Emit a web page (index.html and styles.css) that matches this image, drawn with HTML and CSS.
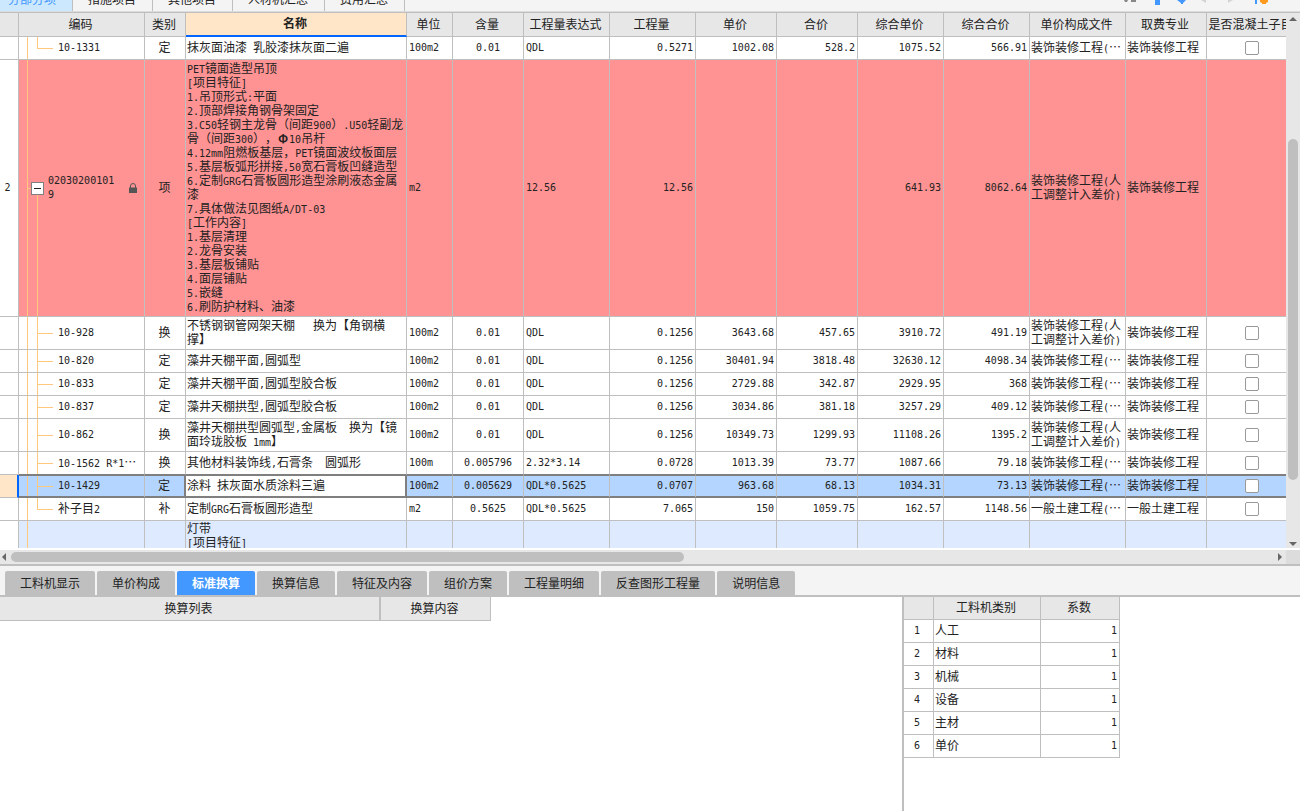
FILE: index.html
```html
<!DOCTYPE html>
<html lang="zh-CN">
<head>
<meta charset="utf-8">
<title>分部分项</title>
<link rel="stylesheet" href="styles.css">
</head>
<body>
<header class="topbar">
  <nav class="toptabs">
    <button class="toptab active">分部分项</button>
    <button class="toptab">措施项目</button>
    <button class="toptab">其他项目</button>
    <button class="toptab">人材机汇总</button>
    <button class="toptab">费用汇总</button>
  </nav>
  <svg class="tools" width="150" height="5" viewBox="0 0 150 5" aria-hidden="true">
    <path d="M0 0h4l-1 2h-2zM7 0h5v2h-5z" fill="#888"/>
    <path d="M31 0h5v5h-5zM53 0h9l-3 3v1h-2v-1z" fill="#4398ff"/>
    <path d="M77 0h5v3zM104 0h5l-5 3z" fill="#d4d4d4"/>
    <path d="M131 0h2v4h-2z" fill="#4398ff"/>
    <path d="M136 0h8v2l-2 1v1h-4v-1l-2-1z" fill="#ff9a1f"/>
  </svg>
</header>

<main class="grid">
  <div class="grid-view">
    <table class="items">
      <colgroup>
        <col class="w19"><col class="w126"><col class="w41"><col class="w221"><col class="w46"><col class="w71"><col class="w86"><col class="w86"><col class="w81"><col class="w81"><col class="w86"><col class="w86"><col class="w96"><col class="w81"><col class="w90">
      </colgroup>
      <thead>
        <tr><th></th><th>编码</th><th>类别</th><th class="current">名称</th><th>单位</th><th>含量</th><th>工程量表达式</th><th>工程量</th><th>单价</th><th>合价</th><th>综合单价</th><th>综合合价</th><th>单价构成文件</th><th>取费专业</th><th>是否混凝土子目</th></tr>
      </thead>
      <tbody>
        <tr><td></td><td class="code last n">10-1331</td><td class="mid">定</td><td>抹灰面油漆<span class="en">&nbsp;</span>乳胶漆抹灰面二遍</td><td class="n">100m2</td><td class="n mid">0.01</td><td class="n">QDL</td><td class="n num">0.5271</td><td class="n num">1002.08</td><td class="n num">528.2</td><td class="n num">1075.52</td><td class="n num">566.91</td><td>装饰装修工程<span class="en">(</span>…</td><td>装饰装修工程</td><td class="mid"><input type="checkbox" aria-label="是否混凝土子目"></td></tr>

        <tr class="red"><td class="n mid">2</td><td class="parent"><div class="parent-box"><button class="toggle" aria-label="折叠"></button><span class="en">02030200101<br>9</span><svg class="lock" width="8" height="10" viewBox="0 0 8 10" aria-label="锁定"><path d="M1.500 5V3a2.500 2.500 0 0 1 5 0v2" fill="none" stroke="#555"/><path d="M0 4.500h8V10H0z" fill="#555"/></svg></div></td><td class="mid">项</td><td><span class="en">PET</span>镜面造型吊顶<br><span class="en">[</span>项目特征<span class="en">]</span><br><span class="en">1.</span>吊顶形式<span class="en">:</span>平面<br><span class="en">2.</span>顶部焊接角钢骨架固定<br><span class="en">3.C50</span>轻钢主龙骨（间距<span class="en">900</span>）<span class="en">.U50</span>轻副龙<br>骨（间距<span class="en">300</span>），<span class="phi">Φ</span><span class="en">10</span>吊杆<br><span class="en">4.12mm</span>阻燃板基层，<span class="en">PET</span>镜面波纹板面层<br><span class="en">5.</span>基层板弧形拼接<span class="en">,50</span>宽石膏板凹缝造型<br><span class="en">6.</span>定制<span class="en">GRG</span>石膏板圆形造型涂刷液态金属<br>漆<br><span class="en">7.</span>具体做法见图纸<span class="en">A/DT-03</span><br><span class="en">[</span>工作内容<span class="en">]</span><br><span class="en">1.</span>基层清理<br><span class="en">2.</span>龙骨安装<br><span class="en">3.</span>基层板铺贴<br><span class="en">4.</span>面层铺贴<br><span class="en">5.</span>嵌缝<br><span class="en">6.</span>刷防护材料、油漆</td><td class="n">m2</td><td></td><td class="n">12.56</td><td class="n num">12.56</td><td></td><td></td><td class="n num">641.93</td><td class="n num">8062.64</td><td>装饰装修工程<span class="en">(</span>人<br>工调整计入差价<span class="en">)</span></td><td>装饰装修工程</td><td></td></tr>

        <tr class="tall"><td></td><td class="code n">10-928</td><td class="mid">换</td><td>不锈钢钢管网架天棚<span class="en">&nbsp;&nbsp;&nbsp;</span>换为【角钢横<br>撑】</td><td class="n">100m2</td><td class="n mid">0.01</td><td class="n">QDL</td><td class="n num">0.1256</td><td class="n num">3643.68</td><td class="n num">457.65</td><td class="n num">3910.72</td><td class="n num">491.19</td><td>装饰装修工程<span class="en">(</span>人<br>工调整计入差价<span class="en">)</span></td><td>装饰装修工程</td><td class="mid"><input type="checkbox" aria-label="是否混凝土子目"></td></tr>

        <tr><td></td><td class="code n">10-820</td><td class="mid">定</td><td>藻井天棚平面<span class="en">,</span>圆弧型</td><td class="n">100m2</td><td class="n mid">0.01</td><td class="n">QDL</td><td class="n num">0.1256</td><td class="n num">30401.94</td><td class="n num">3818.48</td><td class="n num">32630.12</td><td class="n num">4098.34</td><td>装饰装修工程<span class="en">(</span>…</td><td>装饰装修工程</td><td class="mid"><input type="checkbox" aria-label="是否混凝土子目"></td></tr>

        <tr><td></td><td class="code n">10-833</td><td class="mid">定</td><td>藻井天棚平面<span class="en">,</span>圆弧型胶合板</td><td class="n">100m2</td><td class="n mid">0.01</td><td class="n">QDL</td><td class="n num">0.1256</td><td class="n num">2729.88</td><td class="n num">342.87</td><td class="n num">2929.95</td><td class="n num">368</td><td>装饰装修工程<span class="en">(</span>…</td><td>装饰装修工程</td><td class="mid"><input type="checkbox" aria-label="是否混凝土子目"></td></tr>

        <tr><td></td><td class="code n">10-837</td><td class="mid">定</td><td>藻井天棚拱型<span class="en">,</span>圆弧型胶合板</td><td class="n">100m2</td><td class="n mid">0.01</td><td class="n">QDL</td><td class="n num">0.1256</td><td class="n num">3034.86</td><td class="n num">381.18</td><td class="n num">3257.29</td><td class="n num">409.12</td><td>装饰装修工程<span class="en">(</span>…</td><td>装饰装修工程</td><td class="mid"><input type="checkbox" aria-label="是否混凝土子目"></td></tr>

        <tr class="tall"><td></td><td class="code n">10-862</td><td class="mid">换</td><td>藻井天棚拱型圆弧型<span class="en">,</span>金属板<span class="en">&nbsp;&nbsp;</span>换为【镜<br>面玲珑胶板<span class="en">&nbsp;1mm</span>】</td><td class="n">100m2</td><td class="n mid">0.01</td><td class="n">QDL</td><td class="n num">0.1256</td><td class="n num">10349.73</td><td class="n num">1299.93</td><td class="n num">11108.26</td><td class="n num">1395.2</td><td>装饰装修工程<span class="en">(</span>人<br>工调整计入差价<span class="en">)</span></td><td>装饰装修工程</td><td class="mid"><input type="checkbox" aria-label="是否混凝土子目"></td></tr>

        <tr class="before-selected"><td></td><td class="code"><span class="en">10-1562 R*1</span>…</td><td class="mid">换</td><td>其他材料装饰线<span class="en">,</span>石膏条<span class="en">&nbsp;&nbsp;</span>圆弧形</td><td class="n">100m</td><td class="n mid">0.005796</td><td class="n">2.32*3.14</td><td class="n num">0.0728</td><td class="n num">1013.39</td><td class="n num">73.77</td><td class="n num">1087.66</td><td class="n num">79.18</td><td>装饰装修工程<span class="en">(</span>…</td><td>装饰装修工程</td><td class="mid"><input type="checkbox" aria-label="是否混凝土子目"></td></tr>

        <tr class="selected"><td></td><td class="code n">10-1429</td><td class="mid">定</td><td class="cell">涂料<span class="en">&nbsp;</span>抹灰面水质涂料三遍</td><td class="n">100m2</td><td class="n mid">0.005629</td><td class="n">QDL*0.5625</td><td class="n num">0.0707</td><td class="n num">963.68</td><td class="n num">68.13</td><td class="n num">1034.31</td><td class="n num">73.13</td><td>装饰装修工程<span class="en">(</span>…</td><td>装饰装修工程</td><td class="mid"><input type="checkbox" aria-label="是否混凝土子目"></td></tr>

        <tr><td></td><td class="code last">补子目<span class="en">2</span></td><td class="mid">补</td><td>定制<span class="en">GRG</span>石膏板圆形造型</td><td class="n">m2</td><td class="n mid">0.5625</td><td class="n">QDL*0.5625</td><td class="n num">7.065</td><td class="n num">150</td><td class="n num">1059.75</td><td class="n num">162.57</td><td class="n num">1148.56</td><td>一般土建工程<span class="en">(</span>…</td><td>一般土建工程</td><td class="mid"><input type="checkbox" aria-label="是否混凝土子目"></td></tr>

        <tr class="blue"><td></td><td class="parent"></td><td></td><td><div class="cut">灯带<br><span class="en">[</span>项目特征<span class="en">]</span></div></td><td></td><td></td><td></td><td></td><td></td><td></td><td></td><td></td><td></td><td></td><td></td></tr>
      </tbody>
    </table>
  </div>
  <div class="vbar">
    <i class="arrow up"></i><span class="gap-a"></span><span class="vthumb"></span><span class="gap-b"></span><i class="arrow down"></i>
  </div>
</main>
<div class="hbar">
  <div class="htrack"><i class="arrow left"></i><span class="hthumb"></span><span class="hrest"></span><i class="arrow right"></i></div>
  <span class="corner"></span>
</div>

<nav class="tabs">
  <button class="tab">工料机显示</button>
  <button class="tab">单价构成</button>
  <button class="tab active">标准换算</button>
  <button class="tab">换算信息</button>
  <button class="tab">特征及内容</button>
  <button class="tab">组价方案</button>
  <button class="tab">工程量明细</button>
  <button class="tab">反查图形工程量</button>
  <button class="tab">说明信息</button>
</nav>

<section class="panels">
  <div class="left">
    <table class="conv">
      <colgroup><col class="w381"><col class="w110"></colgroup>
      <thead><tr><th class="thick">换算列表</th><th>换算内容</th></tr></thead>
    </table>
  </div>
  <div class="right">
    <table class="coef">
      <colgroup><col class="w30"><col class="w107"><col class="w79"></colgroup>
      <thead><tr><th></th><th>工料机类别</th><th>系数</th></tr></thead>
      <tbody>
        <tr><td class="n mid">1</td><td>人工</td><td class="n num">1</td></tr>
        <tr><td class="n mid">2</td><td>材料</td><td class="n num">1</td></tr>
        <tr><td class="n mid">3</td><td>机械</td><td class="n num">1</td></tr>
        <tr><td class="n mid">4</td><td>设备</td><td class="n num">1</td></tr>
        <tr><td class="n mid">5</td><td>主材</td><td class="n num">1</td></tr>
        <tr><td class="n mid">6</td><td>单价</td><td class="n num">1</td></tr>
      </tbody>
    </table>
  </div>
</section>
</body>
</html>
```
FILE: styles.css
```css
* { box-sizing: border-box; }

body {
  margin: 0;
  min-height: 100vh;
  display: flex;
  flex-direction: column;
  background: #fff;
  color: #222;
  font: 12px/14px "Noto Sans CJK SC", sans-serif;
  text-spacing-trim: space-all;
}

button {
  margin: 0;
  border: 0;
  padding: 0;
  background: none;
  color: inherit;
  font: inherit;
}

/* Half-width characters: two of them fill one full-width character */
.en, .n { font-family: "DejaVu Sans Mono", monospace; font-size: 10px; }
.en { line-height: 10px; }
.phi { display: inline-block; width: 12px; line-height: 12px; text-align: center; font-weight: bold; }

/* Top strip */
.topbar {
  display: flex;
  justify-content: space-between;
  align-items: flex-start;
  background: #f4f4f4;
  border-bottom: 1px solid #dcdcdc;
}
.toptabs { display: flex; align-items: flex-end; height: 11px; overflow: hidden; }
.toptab { padding: 0 16px 5px 15px; border-right: 1px solid #bfbfbf; }
.toptab:first-child { padding-left: 8px; }
.toptab.active { background: #cce8ff; color: #4398ff; }
.tools { margin-right: 26px; }

/* Main grid */
.grid { display: flex; border-top: 1px solid #bfbfbf; }
.grid-view { flex: 1; min-width: 0; overflow: hidden; }
table { table-layout: fixed; border-collapse: separate; border-spacing: 0; }
.items { width: 1297px; }
.conv { width: 491px; }
.coef { width: 216px; }
.w19 { width: 19px; } .w126 { width: 126px; } .w41 { width: 41px; }
.w221 { width: 221px; } .w46 { width: 46px; } .w71 { width: 71px; }
.w86 { width: 86px; } .w81 { width: 81px; } .w96 { width: 96px; } .w90 { width: 90px; }
.w381 { width: 381px; } .w110 { width: 110px; }
.w30 { width: 30px; } .w107 { width: 107px; } .w79 { width: 79px; }

th, td {
  height: 23px;
  padding: 0 2px 2px 1px;
  border-right: 1px solid #bfbfbf;
  border-bottom: 1px solid #bfbfbf;
  text-align: left;
  vertical-align: middle;
  white-space: nowrap;
}
th { padding-right: 3px; background: #e7e7e7; text-align: center; font-weight: normal; }
td.n { padding: 0 2px; }
td:first-child.n { padding-right: 5px; }
td:has(input) { padding: 0; }
.items th { height: 24px; }
th.current { background: #ffe6c8; border-bottom: 2px solid #0066ff; font-weight: bold; }
.mid { text-align: center; }
.num { text-align: right; }
.tall td { height: 33px; }

/* Tree guides */
.code, .parent {
  --line: linear-gradient(#ffc87d, #ffc87d);
  background-repeat: no-repeat;
}
td.code {
  padding-left: 39px;
  background-image: var(--line), var(--line), var(--line);
  background-position: 8px 0, 18px 0, 18px 50%;
  background-size: 1px 100%, 1px 100%, 16px 1px;
}
td.code.last { background-size: 1px 100%, 1px 50%, 16px 1px; }
.parent {
  background-image: var(--line);
  background-position: 8px 0;
  background-size: 1px 100%;
}
.red .parent {
  padding: 0 7px 0 12px;
  background-image: var(--line), var(--line), var(--line);
  background-position: 8px 0, 18px 100%, 8px 50%;
  background-size: 1px 100%, 1px 50%, 4px 1px;
}
.parent-box { display: flex; align-items: center; }
.parent-box .en { flex: 1; margin-left: 4px; line-height: 14px; }
.toggle {
  width: 13px;
  height: 13px;
  border: 1px solid #808080;
  background: linear-gradient(#222, #222) center / 7px 1px no-repeat #fff;
}

.red td { height: 257px; }
.red td:not(:first-child) { background-color: #ff9292; }
.blue td { height: 27px; padding-bottom: 0; border-bottom: 0; }
.blue td:not(:first-child) { background-color: #deeaff; }
.cut { height: 27px; overflow: hidden; }

.before-selected td:not(:first-child) { border-bottom-color: #7f7f7f; }
.selected td { background-color: #b3d5ff; border-top: 1px solid #7f7f7f; border-bottom: 2px solid #7f7f7f; }
.selected td:first-child {
  background: #ffe6c8;
  border-top: 0;
  border-bottom: 1px solid #bfbfbf;
  border-right: 2px solid #0066ff;
}
.selected td.cell { background: #fff; border-right: 2px solid #7f7f7f; padding-left: 1px; }
.selected td:nth-child(3) { border-right: 2px solid #7f7f7f; }

input[type="checkbox"] {
  appearance: none;
  display: block;
  width: 14px;
  height: 14px;
  margin: 0 auto;
  border: 1px solid #999;
  border-radius: 2px;
  background: #fff;
}

/* Scroll bars */
.arrow { width: 0; height: 0; border: 4px solid transparent; }
.up { border-top: 0; border-bottom-color: #666; }
.down { border-bottom: 0; border-top-color: #666; }
.left.arrow { border-left: 0; border-right-color: #666; }
.right.arrow { border-right: 0; border-left-color: #666; }
.vbar {
  width: 14px;
  display: flex;
  flex-direction: column;
  align-items: center;
  padding: 4px 0 2px;
  background: #e7e7e7;
}
.vthumb { width: 10px; flex: 340; border-radius: 5px; background: #bfbfbf; }
.gap-a { flex: 118; }
.gap-b { flex: 62; }
.hbar { display: flex; margin-top: 2px; height: 16px; border-bottom: 2px solid #bfbfbf; background: #e7e7e7; }
.htrack { flex: 1; display: flex; align-items: center; padding: 0 4px 0 2px; }
.hthumb { flex: 672; height: 10px; margin-left: 5px; border-radius: 5px; background: #bfbfbf; }
.hrest { flex: 594; }
.corner { width: 14px; background: #dcdcdc; }

/* Lower tabs */
.tabs {
  display: flex;
  gap: 2px;
  padding: 5px 5px 0;
  background: #f4f4f4;
  border-bottom: 2px solid #bfbfbf;
}
.tab { height: 24px; padding: 0 15px; border-radius: 2px 2px 0 0; background: #bfbfbf; }
.tab.active { background: #4398ff; color: #fff; font-weight: bold; }

/* Lower panels */
.panels { flex: 1; display: flex; }
.panels .left { flex: 1; }
.panels .right { width: 398px; border-left: 2px solid #bfbfbf; }
.conv th { height: 24px; }
.conv .thick { border-right-width: 2px; }
.coef th, .coef td { height: 23px; }
```
